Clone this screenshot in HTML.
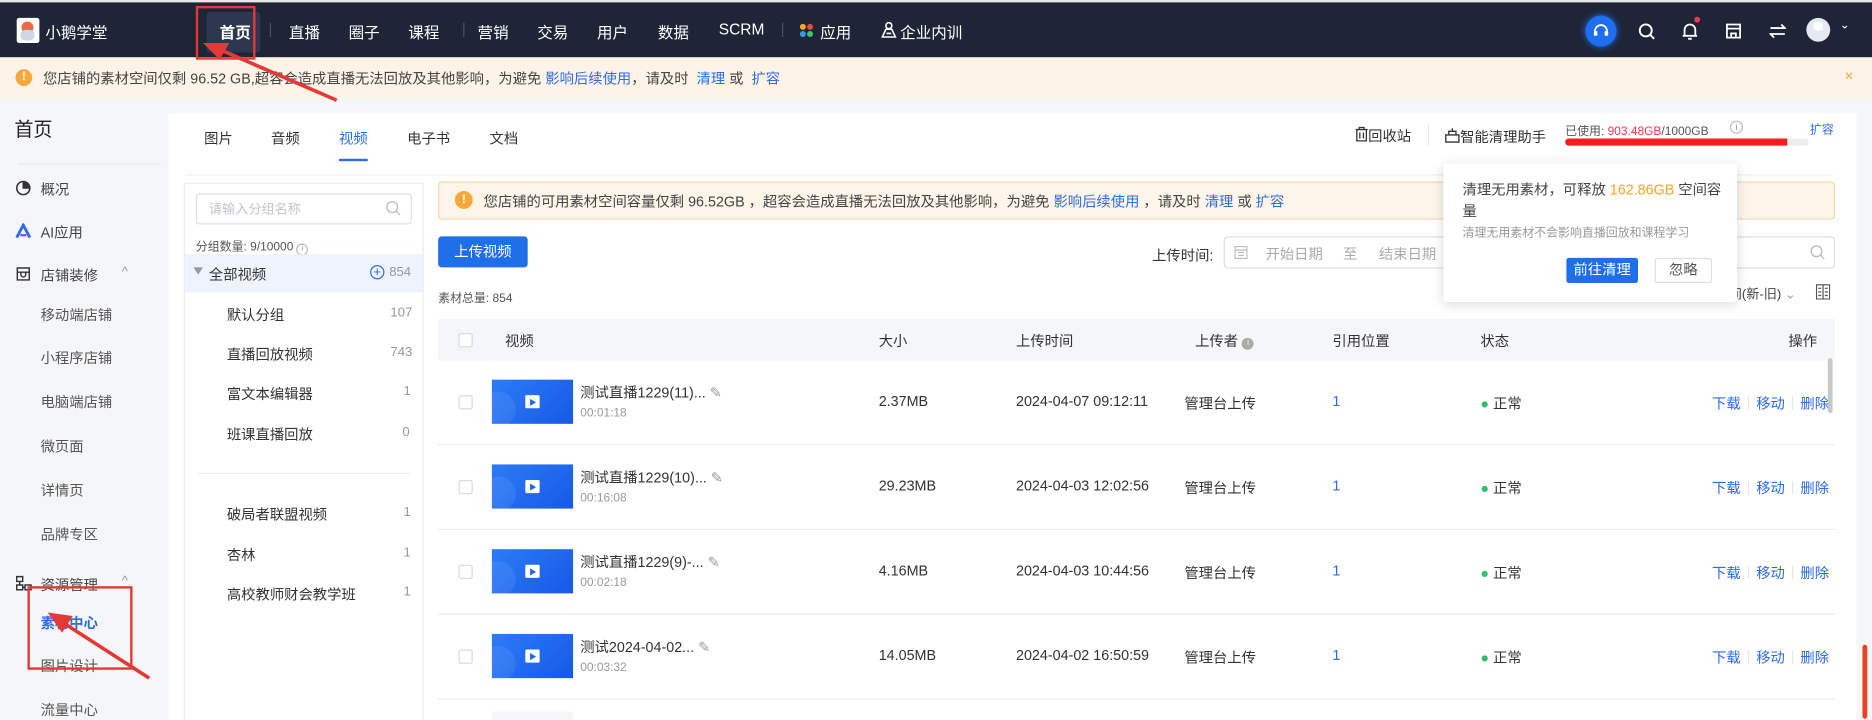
<!DOCTYPE html>
<html><head><meta charset="utf-8">
<style>
*{margin:0;padding:0;box-sizing:border-box}
html,body{width:1872px;height:720px;overflow:hidden;background:#f5f6f8}
body{font-family:"Liberation Sans","Noto Sans CJK SC",sans-serif;color:#333}
#w{position:absolute;left:0;top:0;width:1568px;height:603px;transform:scale(1.19388);transform-origin:0 0;background:#f5f6f8;overflow:hidden}
.a{position:absolute;white-space:nowrap}
.nav{position:absolute;left:0;top:2px;width:1568px;height:46px;background:#1e2536}
.nv{position:absolute;top:17px;color:#fff;font-size:13px}
.sep{position:absolute;top:19px;width:1px;height:12px;background:#4a5366}
.blue{color:#2e6be6 !important}
.sb{font-size:12px;color:#444}
.g{font-size:12px;color:#333}
.cnt{font-size:11px;color:#999}
.th{font-size:12px;color:#333;top:277px}
.td{font-size:12px;color:#333}
.thumb{position:absolute;left:412px;width:68px;height:37px;background:linear-gradient(135deg,#2c7cf6,#1659e6);overflow:hidden}
.thumb:before{content:"";position:absolute;left:-10px;top:10px;width:30px;height:30px;border-radius:50%;background:rgba(255,255,255,.08)}
.thumb i{position:absolute;left:28px;top:13px;width:12px;height:11px;background:#fff;border-radius:1px}
.thumb i:after{content:"";position:absolute;left:4px;top:3px;border-left:5px solid #1f66ee;border-top:3px solid transparent;border-bottom:3px solid transparent}
.cb{position:absolute;left:384px;width:12px;height:12px;border:1px solid #d9d9d9;border-radius:2px;background:#fff}
.rl{position:absolute;left:367px;width:1170px;height:1px;background:#ebedf0}
.ops{position:absolute;left:1434px;font-size:12px;color:#2e6be6;white-space:nowrap}
.ops b{font-weight:normal;display:inline-block;width:1px;height:11px;background:#e3e6eb;margin:0 6px;vertical-align:-1px}
</style></head><body><div id="w">
<div class="a" style="left:0;top:0;width:1568px;height:2px;background:#e8e8e8"></div>
<div class="nav"></div>
<div class="a" style="left:14px;top:15px;width:19px;height:21px;background:#fff;border-radius:2px"><div style="position:absolute;left:4px;top:3px;width:10px;height:10px;border-radius:50%;background:#e96a4b"></div><div style="position:absolute;left:3px;top:10px;width:12px;height:9px;border-radius:5px;background:#cfd6e6"></div></div>
<div class="nv" style="left:38px">小鹅学堂</div>
<div class="a" style="left:173px;top:10px;width:45px;height:34px;background:#2d3750;border-radius:3px"></div>
<div class="nv" style="left:184px;font-weight:bold">首页</div>
<div class="sep" style="left:226px"></div>
<div class="nv" style="left:242px">直播</div>
<div class="nv" style="left:292px">圈子</div>
<div class="nv" style="left:342px">课程</div>
<div class="sep" style="left:388px"></div>
<div class="nv" style="left:400px">营销</div>
<div class="nv" style="left:450px">交易</div>
<div class="nv" style="left:500px">用户</div>
<div class="nv" style="left:551px">数据</div>
<div class="nv" style="left:602px">SCRM</div>
<div class="sep" style="left:655px"></div>
<div class="a" style="left:670px;top:20px;width:11px;height:11px"><div style="position:absolute;left:0;top:0;width:5px;height:5px;border-radius:50%;background:#f5a623"></div><div style="position:absolute;left:6px;top:0;width:5px;height:5px;border-radius:50%;background:#e94b3c"></div><div style="position:absolute;left:0;top:6px;width:5px;height:5px;border-radius:50%;background:#2e9bf0"></div><div style="position:absolute;left:6px;top:6px;width:5px;height:5px;border-radius:50%;background:#3cc46e"></div></div>
<div class="nv" style="left:687px">应用</div>
<svg class="a" style="left:738px;top:18px" width="13" height="14" viewBox="0 0 13 14"><circle cx="6.5" cy="3.5" r="2.5" fill="none" stroke="#fff" stroke-width="1.3"/><path d="M1 13 L4 6.5 H9 L12 13 Z M4.5 10 H8.5" fill="none" stroke="#fff" stroke-width="1.3"/></svg>
<div class="nv" style="left:754px">企业内训</div>
<div class="a" style="left:1328px;top:13px;width:26px;height:26px;border-radius:50%;background:#1e6ef0;box-shadow:0 0 6px #1e6ef0"></div>
<svg class="a" style="left:1333px;top:18px" width="16" height="16" viewBox="0 0 16 16"><path d="M3 10 V8 A5 5 0 0 1 13 8 V10" fill="none" stroke="#fff" stroke-width="1.5"/><rect x="2" y="8" width="3" height="4" rx="1" fill="#fff"/><rect x="11" y="8" width="3" height="4" rx="1" fill="#fff"/></svg>
<svg class="a" style="left:1372px;top:19px" width="15" height="15" viewBox="0 0 15 15"><circle cx="6.5" cy="6.5" r="5" fill="none" stroke="#fff" stroke-width="1.6"/><path d="M10 10 L13.5 13.5" stroke="#fff" stroke-width="1.6"/></svg>
<svg class="a" style="left:1408px;top:18px" width="15" height="16" viewBox="0 0 15 16"><path d="M3 12 V7 A4.5 4.5 0 0 1 12 7 V12 Z M1.5 12 H13.5 M6 14.5 H9" fill="none" stroke="#fff" stroke-width="1.5"/></svg>
<div class="a" style="left:1419px;top:14px;width:5px;height:5px;border-radius:50%;background:#f5384a"></div>
<svg class="a" style="left:1445px;top:19px" width="14" height="14" viewBox="0 0 14 14"><path d="M1.5 1.5 H12.5 V12.5 H1.5 Z M1.5 5 H12.5 M5 12.5 V9 H9 V12.5" fill="none" stroke="#fff" stroke-width="1.5"/></svg>
<svg class="a" style="left:1482px;top:19px" width="14" height="14" viewBox="0 0 14 14"><path d="M1 4.5 H13 L10 1.5 M13 9.5 H1 L4 12.5" fill="none" stroke="#fff" stroke-width="1.5"/></svg>
<div class="a" style="left:1513px;top:15px;width:20px;height:20px;border-radius:50%;background:#e6e9ef"></div>
<div class="a" style="left:1519px;top:18px;width:8px;height:8px;border-radius:50%;background:#fff"></div>
<div class="a" style="left:1541px;top:16px;color:#fff;font-size:10px">&#8964;</div>
<div class="a" style="left:0;top:48px;width:1568px;height:34px;background:#fdf3e6"></div>
<div class="a" style="left:13px;top:58px;width:14px;height:14px;border-radius:50%;background:#f7a83a;color:#fff;font-size:10px;text-align:center;line-height:14px;font-weight:bold">!</div>
<div class="a" style="left:36px;top:57px;font-size:12px;color:#444">您店铺的素材空间仅剩 96.52 GB,超容会造成直播无法回放及其他影响，为避免 <span class="blue">影响后续使用</span>，请及时 &nbsp;<span class="blue">清理</span> 或 &nbsp;<span class="blue">扩容</span></div>
<div class="a" style="left:1545px;top:56px;color:#f7a83a;font-size:13px">×</div>
<div class="a" style="left:12px;top:95px;font-size:16px;color:#222">首页</div>
<div class="a" style="left:15px;top:137px;width:120px;height:1px;background:#e6e8ec"></div>
<svg class="a" style="left:13px;top:151px" width="13" height="13" viewBox="0 0 13 13"><circle cx="6.5" cy="6.5" r="5.5" fill="none" stroke="#333" stroke-width="1.3"/><path d="M6.5 1 V6.5 H12" fill="none" stroke="#333" stroke-width="1.3"/><path d="M6.5 1.5 A5 5 0 0 1 11.5 6.5 H6.5Z" fill="#333"/></svg>
<div class="a sb" style="left:34px;top:150px">概况</div>
<svg class="a" style="left:13px;top:187px" width="13" height="13" viewBox="0 0 13 13"><path d="M1 12 L6.5 1.5 L12 12" fill="none" stroke="#2e6be6" stroke-width="2.4"/><path d="M4 10 H9" stroke="#8a4df0" stroke-width="2"/></svg>
<div class="a sb" style="left:34px;top:186px">AI应用</div>
<svg class="a" style="left:13px;top:223px" width="13" height="13" viewBox="0 0 13 13"><path d="M1.5 1.5 H11.5 V11.5 H1.5 Z M1.5 5 H11.5 M4.5 5 V7 A2 2 0 0 0 8.5 7 V5" fill="none" stroke="#333" stroke-width="1.2"/></svg>
<div class="a sb" style="left:34px;top:222px">店铺装修</div>
<div class="a" style="left:102px;top:222px;color:#999;font-size:11px">^</div>
<div class="a sb" style="left:34px;top:255px;color:#555">移动端店铺</div>
<div class="a sb" style="left:34px;top:291px;color:#555">小程序店铺</div>
<div class="a sb" style="left:34px;top:328px;color:#555">电脑端店铺</div>
<div class="a sb" style="left:34px;top:365px;color:#555">微页面</div>
<div class="a sb" style="left:34px;top:402px;color:#555">详情页</div>
<div class="a sb" style="left:34px;top:439px;color:#555">品牌专区</div>
<svg class="a" style="left:13px;top:482px" width="14" height="13" viewBox="0 0 14 13"><path d="M1 1 H6 V5 H1Z M1 8 H6 V12 H1Z M8 8 H13 V12 H8Z M3.5 5 V8 M6 10 H8" fill="none" stroke="#333" stroke-width="1.2"/></svg>
<div class="a sb" style="left:34px;top:481px">资源管理</div>
<div class="a" style="left:102px;top:481px;color:#999;font-size:11px">^</div>
<div class="a sb" style="left:34px;top:513px;color:#2e6be6;font-weight:bold">素材中心</div>
<div class="a sb" style="left:34px;top:549px;color:#555">图片设计</div>
<div class="a sb" style="left:34px;top:586px;color:#555">流量中心</div>
<div class="a" style="left:141px;top:95px;width:1414px;height:510px;background:#fff"></div>
<div class="a g" style="left:171px;top:107px">图片</div>
<div class="a g" style="left:227px;top:107px">音频</div>
<div class="a g" style="left:284px;top:107px;color:#2e6be6">视频</div>
<div class="a" style="left:284px;top:133px;width:24px;height:2px;background:#2e6be6"></div>
<div class="a g" style="left:341px;top:107px">电子书</div>
<div class="a g" style="left:410px;top:107px">文档</div>
<div class="a" style="left:155px;top:146px;width:1380px;height:1px;background:#ebedf0"></div>
<svg class="a" style="left:1135px;top:106px" width="11" height="13" viewBox="0 0 11 13"><path d="M0.5 2.5 H10.5 M3.5 2.5 V0.8 H7.5 V2.5 M1.5 2.5 V12 H9.5 V2.5 M4 5 V10 M7 5 V10" fill="none" stroke="#333" stroke-width="1.1"/></svg>
<div class="a g" style="left:1146px;top:105px">回收站</div>
<div class="a" style="left:1196px;top:104px;width:1px;height:18px;background:#e6e8ec"></div>
<svg class="a" style="left:1210px;top:107px" width="13" height="13" viewBox="0 0 13 13"><path d="M1 6 H12 V12 H1Z M3.5 6 V3 H9.5 V6 M6.5 3 V0.5" fill="none" stroke="#333" stroke-width="1.1"/></svg>
<div class="a g" style="left:1223px;top:106px">智能清理助手</div>
<div class="a" style="left:1311px;top:101px;font-size:10px;color:#555">已使用: <span style="color:#f5384a">903.48GB</span>/1000GB</div>
<div class="a" style="left:1449px;top:101px;width:11px;height:11px;border:1px solid #bbb;border-radius:50%;font-size:8px;color:#999;text-align:center;line-height:9px">i</div>
<div class="a blue" style="left:1516px;top:100px;font-size:10px">扩容</div>
<div class="a" style="left:1311px;top:116px;width:204px;height:6px;background:#eee;border-radius:3px"></div>
<div class="a" style="left:1311px;top:116px;width:186px;height:6px;background:#f31e1e;border-radius:3px 0 0 3px"></div>
<div class="a" style="left:154px;top:153px;width:201px;height:452px;border:1px solid #ebedf0;border-bottom:none"></div>
<div class="a" style="left:164px;top:162px;width:181px;height:26px;border:1px solid #dcdfe6;border-radius:3px"></div>
<div class="a" style="left:175px;top:167px;font-size:11px;color:#c0c4cc">请输入分组名称</div>
<svg class="a" style="left:323px;top:168px" width="13" height="13" viewBox="0 0 13 13"><circle cx="5.5" cy="5.5" r="4.5" fill="none" stroke="#bbb" stroke-width="1.1"/><path d="M9 9 L12 12" stroke="#bbb" stroke-width="1.1"/></svg>
<div class="a" style="left:164px;top:198px;font-size:10px;color:#555">分组数量: 9/10000 <span style="display:inline-block;width:10px;height:10px;border:1px solid #bbb;border-radius:50%;font-size:7px;text-align:center;line-height:8px;color:#999">i</span></div>
<div class="a" style="left:155px;top:213px;width:199px;height:32px;background:#eef3fd"></div>
<div class="a" style="left:162px;top:224px;border-top:6px solid #999;border-left:4px solid transparent;border-right:4px solid transparent"></div>
<div class="a g" style="left:175px;top:221px">全部视频</div>
<div class="a" style="left:310px;top:222px;width:12px;height:12px;border:1px solid #2e6be6;border-radius:50%;color:#2e6be6;font-size:11px;text-align:center;line-height:10px">+</div>
<div class="a cnt" style="left:326px;top:222px">854</div>
<div class="a g" style="left:190px;top:255px">默认分组</div><div class="a cnt" style="left:327px;top:256px">107</div>
<div class="a g" style="left:190px;top:288px">直播回放视频</div><div class="a cnt" style="left:327px;top:289px">743</div>
<div class="a g" style="left:190px;top:321px">富文本编辑器</div><div class="a cnt" style="left:338px;top:322px">1</div>
<div class="a g" style="left:190px;top:355px">班课直播回放</div><div class="a cnt" style="left:337px;top:356px">0</div>
<div class="a" style="left:166px;top:396px;width:177px;height:1px;background:#ebedf0"></div>
<div class="a g" style="left:190px;top:422px">破局者联盟视频</div><div class="a cnt" style="left:338px;top:423px">1</div>
<div class="a g" style="left:190px;top:456px">杏林</div><div class="a cnt" style="left:338px;top:457px">1</div>
<div class="a g" style="left:190px;top:489px">高校教师财会教学班</div><div class="a cnt" style="left:338px;top:490px">1</div>
<div class="a" style="left:367px;top:152px;width:1170px;height:32px;background:#fdf5ea;border:1px solid #f6d6a6;border-radius:3px"></div>
<div class="a" style="left:381px;top:160px;width:15px;height:15px;border-radius:50%;background:#f7a83a;color:#fff;font-size:10px;text-align:center;line-height:15px;font-weight:bold">!</div>
<div class="a" style="left:405px;top:160px;font-size:12px;color:#444">您店铺的可用素材空间容量仅剩 96.52GB ，超容会造成直播无法回放及其他影响，为避免 <span class="blue">影响后续使用</span> ，请及时 <span class="blue">清理</span> 或 <span class="blue">扩容</span></div>
<div class="a" style="left:367px;top:198px;width:75px;height:26px;background:#1f6fe8;border-radius:3px;color:#fff;font-size:12px;text-align:center;line-height:26px">上传视频</div>
<div class="a g" style="left:965px;top:205px">上传时间:</div>
<div class="a" style="left:1025px;top:198px;width:512px;height:27px;border:1px solid #dcdfe6;border-radius:3px"></div>
<svg class="a" style="left:1034px;top:205px" width="11" height="12" viewBox="0 0 11 12"><path d="M0.5 1.5 H10.5 V11.5 H0.5Z M0.5 4.5 H10.5 M3 6.5 H8 M3 9 H8" fill="none" stroke="#bbb" stroke-width="1"/></svg>
<div class="a" style="left:1060px;top:204px;font-size:12px;color:#aaa">开始日期</div>
<div class="a" style="left:1125px;top:204px;font-size:12px;color:#aaa">至</div>
<div class="a" style="left:1155px;top:204px;font-size:12px;color:#aaa">结束日期</div>
<svg class="a" style="left:1516px;top:205px" width="13" height="13" viewBox="0 0 13 13"><circle cx="5.5" cy="5.5" r="4.5" fill="none" stroke="#bbb" stroke-width="1.1"/><path d="M9 9 L12 12" stroke="#bbb" stroke-width="1.1"/></svg>
<div class="a" style="left:367px;top:241px;font-size:10px;color:#555">素材总量: 854</div>
<div class="a" style="left:1415px;top:238px;font-size:11px;color:#444">上传时间(新-旧) <span style="color:#999">&#8964;</span></div>
<svg class="a" style="left:1521px;top:238px" width="12" height="13" viewBox="0 0 12 13"><path d="M0.5 0.5 H11.5 V12.5 H0.5Z M6 0.5 V12.5 M2 3.5 H4.5 M2 6.5 H4.5 M2 9.5 H4.5 M7.5 3.5 H10 M7.5 6.5 H10 M7.5 9.5 H10" fill="none" stroke="#555" stroke-width="1"/></svg>
<div class="a" style="left:1209px;top:137px;width:246px;height:116px;background:#fff;box-shadow:0 2px 10px rgba(0,0,0,.15);border-radius:3px"></div>
<div class="a" style="left:1225px;top:150px;font-size:12px;color:#444">清理无用素材，可释放 <span style="color:#f5a623">162.86GB</span> 空间容</div>
<div class="a" style="left:1225px;top:168px;font-size:12px;color:#444">量</div>
<div class="a" style="left:1225px;top:186px;font-size:10px;color:#999">清理无用素材不会影响直播回放和课程学习</div>
<div class="a" style="left:1312px;top:216px;width:60px;height:21px;background:#1f6fe8;border-radius:2px;color:#fff;font-size:12px;text-align:center;line-height:21px">前往清理</div>
<div class="a" style="left:1386px;top:216px;width:48px;height:21px;border:1px solid #dcdfe6;border-radius:2px;color:#555;font-size:12px;text-align:center;line-height:19px">忽略</div>
<div class="a" style="left:367px;top:267px;width:1170px;height:35px;background:#f5f6f8"></div>
<div class="cb" style="top:279px"></div>
<div class="a th" style="left:423px">视频</div>
<div class="a th" style="left:736px">大小</div>
<div class="a th" style="left:851px">上传时间</div>
<div class="a th" style="left:1001px">上传者 <span style="display:inline-block;width:10px;height:10px;border-radius:50%;background:#aaa;color:#fff;font-size:7px;text-align:center;line-height:10px;vertical-align:1px">i</span></div>
<div class="a th" style="left:1116px">引用位置</div>
<div class="a th" style="left:1240px">状态</div>
<div class="a th" style="left:1498px">操作</div>

<div class="cb" style="top:331px"></div><div class="thumb" style="top:318px"><i></i></div>
<div class="a td" style="left:486px;top:320px">测试直播1229(11)... <span style="color:#999">✎</span></div><div class="a" style="left:486px;top:341px;font-size:10px;color:#999">00:01:18</div>
<div class="a td" style="left:736px;top:329px">2.37MB</div><div class="a td" style="left:851px;top:329px">2024-04-07 09:12:11</div><div class="a td" style="left:992px;top:329px">管理台上传</div><div class="a td blue" style="left:1116px;top:329px">1</div>
<div class="a td" style="left:1240px;top:329px"><span style="color:#2fbf71">●</span> 正常</div>
<div class="ops" style="top:329px">下载<b></b>移动<b></b>删除</div>
<div class="rl" style="top:372px"></div>

<div class="cb" style="top:402px"></div><div class="thumb" style="top:389px"><i></i></div>
<div class="a td" style="left:486px;top:391px">测试直播1229(10)... <span style="color:#999">✎</span></div><div class="a" style="left:486px;top:412px;font-size:10px;color:#999">00:16:08</div>
<div class="a td" style="left:736px;top:400px">29.23MB</div><div class="a td" style="left:851px;top:400px">2024-04-03 12:02:56</div><div class="a td" style="left:992px;top:400px">管理台上传</div><div class="a td blue" style="left:1116px;top:400px">1</div>
<div class="a td" style="left:1240px;top:400px"><span style="color:#2fbf71">●</span> 正常</div>
<div class="ops" style="top:400px">下载<b></b>移动<b></b>删除</div>
<div class="rl" style="top:443px"></div>

<div class="cb" style="top:473px"></div><div class="thumb" style="top:460px"><i></i></div>
<div class="a td" style="left:486px;top:462px">测试直播1229(9)-... <span style="color:#999">✎</span></div><div class="a" style="left:486px;top:483px;font-size:10px;color:#999">00:02:18</div>
<div class="a td" style="left:736px;top:471px">4.16MB</div><div class="a td" style="left:851px;top:471px">2024-04-03 10:44:56</div><div class="a td" style="left:992px;top:471px">管理台上传</div><div class="a td blue" style="left:1116px;top:471px">1</div>
<div class="a td" style="left:1240px;top:471px"><span style="color:#2fbf71">●</span> 正常</div>
<div class="ops" style="top:471px">下载<b></b>移动<b></b>删除</div>
<div class="rl" style="top:514px"></div>

<div class="cb" style="top:544px"></div><div class="thumb" style="top:531px"><i></i></div>
<div class="a td" style="left:486px;top:533px">测试2024-04-02... <span style="color:#999">✎</span></div><div class="a" style="left:486px;top:554px;font-size:10px;color:#999">00:03:32</div>
<div class="a td" style="left:736px;top:542px">14.05MB</div><div class="a td" style="left:851px;top:542px">2024-04-02 16:50:59</div><div class="a td" style="left:992px;top:542px">管理台上传</div><div class="a td blue" style="left:1116px;top:542px">1</div>
<div class="a td" style="left:1240px;top:542px"><span style="color:#2fbf71">●</span> 正常</div>
<div class="ops" style="top:542px">下载<b></b>移动<b></b>删除</div>
<div class="rl" style="top:585px"></div>
<div class="a" style="left:412px;top:596px;width:68px;height:10px;background:#f5f6f8"></div>

<div class="a" style="left:1531px;top:300px;width:4px;height:46px;background:#c8c8c8;border-radius:2px"></div>
<div class="a" style="left:1555px;top:82px;width:13px;height:521px;background:#f5f6f8"></div>
<div class="a" style="left:1560px;top:540px;width:4px;height:62px;background:#f0401e;border-radius:2px"></div>

<div class="a" style="left:164px;top:5px;width:50px;height:45px;border:2px solid #e53935"></div>
<svg class="a" style="left:0;top:0" width="1568" height="603" viewBox="0 0 1568 603">
<path d="M282 84 L183 41" stroke="#e53935" stroke-width="3"/><path d="M170 36 L192 36 L184 50 Z" fill="#e53935"/>
<path d="M125 568 L52 521" stroke="#e53935" stroke-width="3"/><path d="M40 513 L61 516 L52 530 Z" fill="#e53935"/>
</svg>
<div class="a" style="left:23px;top:491px;width:88px;height:70px;border:2px solid #e53935"></div>
</div></body></html>
